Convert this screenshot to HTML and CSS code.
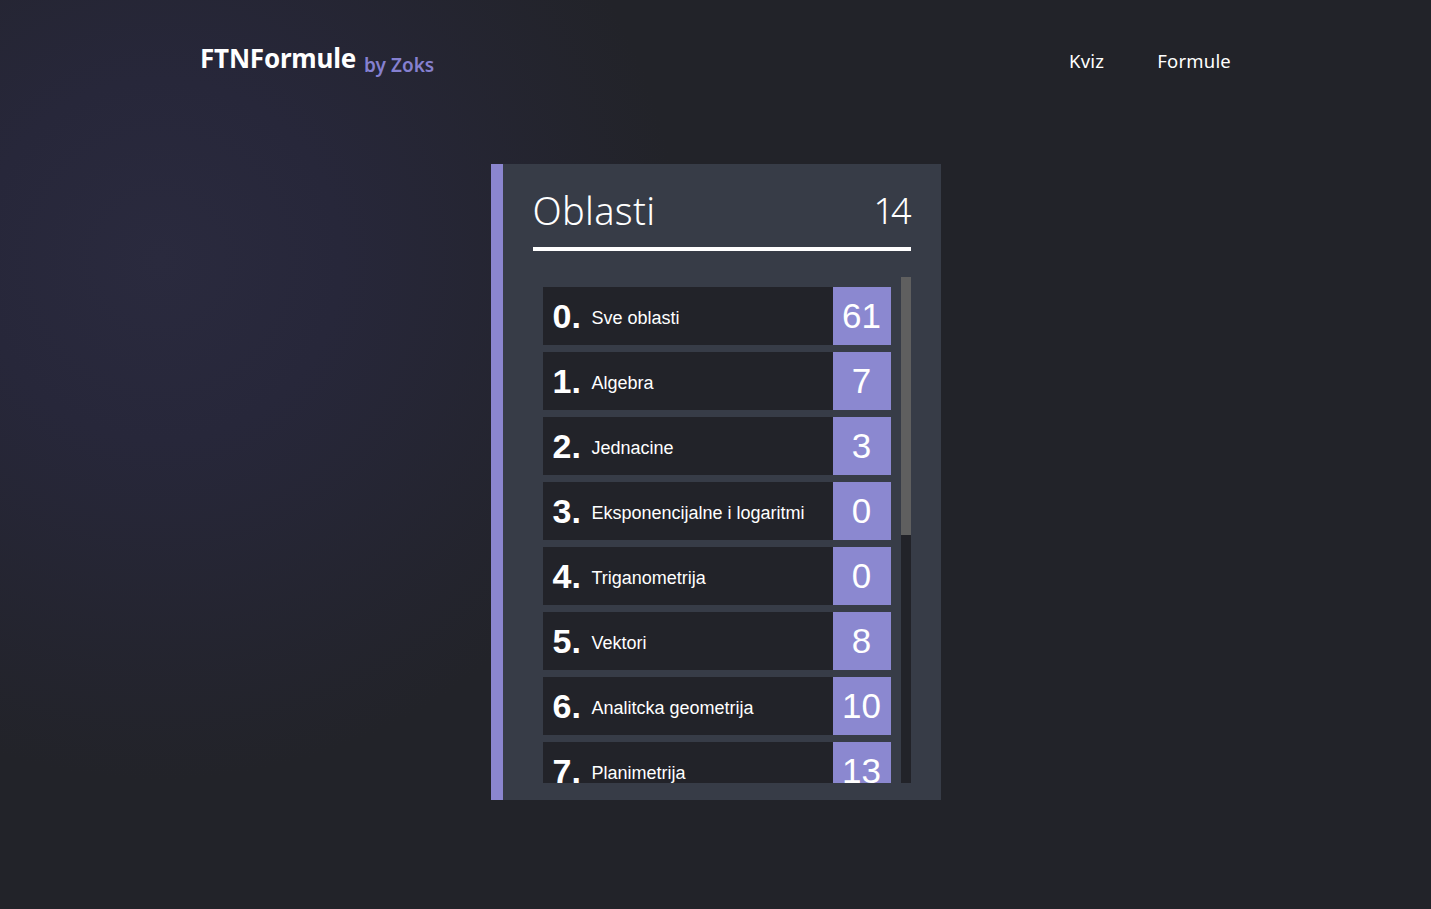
FILE: index.html
```html
<!DOCTYPE html>
<html lang="sr">
<head>
<meta charset="utf-8">
<title>FTNFormule</title>
<link rel="stylesheet" href="styles.css">
</head>
<body>
<header class="topbar">
  <div class="brand"><span class="brand-name">FTNFormule</span><span class="brand-by">by Zoks</span></div>
  <nav class="nav">
    <a class="nav-link" href="#">Kviz</a>
    <a class="nav-link" href="#">Formule</a>
  </nav>
</header>
<main class="main">
  <section class="card">
    <div class="card-head">
      <h1 class="card-title">Oblasti</h1>
      <span class="card-total">14</span>
    </div>
    <div class="scroller">
      <ul class="list">
        <li class="item"><span class="idx">0.</span><span class="label">Sve oblasti</span><span class="count">61</span></li>
        <li class="item"><span class="idx">1.</span><span class="label">Algebra</span><span class="count">7</span></li>
        <li class="item"><span class="idx">2.</span><span class="label">Jednacine</span><span class="count">3</span></li>
        <li class="item"><span class="idx">3.</span><span class="label">Eksponencijalne i logaritmi</span><span class="count">0</span></li>
        <li class="item"><span class="idx">4.</span><span class="label">Triganometrija</span><span class="count">0</span></li>
        <li class="item"><span class="idx">5.</span><span class="label">Vektori</span><span class="count">8</span></li>
        <li class="item"><span class="idx">6.</span><span class="label">Analitcka geometrija</span><span class="count">10</span></li>
        <li class="item"><span class="idx">7.</span><span class="label">Planimetrija</span><span class="count">13</span></li>
      </ul>
      <div class="scrollbar"><div class="thumb"></div></div>
    </div>
  </section>
</main>
</body>
</html>
```
FILE: styles.css
```css
* { box-sizing: border-box; }
html, body { height: 100%; }
body {
  margin: 0;
  color: #fff;
  font-family: "Noto Sans", "Inter", sans-serif;
  background-color: #222329;
  background-image: radial-gradient(circle at 160px 260px, #2a2a3e 0, #27273a 180px, rgba(34,35,41,0) 520px);
  overflow: hidden;
}
.topbar {
  width: 1031px;
  margin: 0 auto;
  padding-top: 40px;
  height: 164px;
  display: flex;
  justify-content: space-between;
  align-items: flex-start;
}
.brand { display: flex; align-items: baseline; gap: 8px; }
.brand-name {
  font-family: "Noto Sans", sans-serif;
  font-weight: 700;
  font-size: 26px;
  letter-spacing: -0.2px;
}
.brand-by {
  font-family: "Noto Sans", sans-serif;
  font-weight: 600;
  font-size: 19px;
  color: #8580d0;
  position: relative;
  top: 4px;
}
.nav { display: flex; gap: 53px; padding-top: 8px; }
.nav-link {
  color: #fff;
  text-decoration: none;
  font-family: "Noto Sans", sans-serif;
  font-size: 18.5px;
  letter-spacing: 0.2px;
}
.main { display: flex; justify-content: center; }
.card {
  width: 450px;
  height: 636px;
  background: #373c47;
  border-left: 12px solid #8b86cf;
  padding: 20px 30px 17px 30px;
  display: flex;
  flex-direction: column;
}
.card-head {
  display: flex;
  justify-content: space-between;
  align-items: center;
  height: 67px;
  padding-bottom: 11px;
  border-bottom: 4px solid #fff;
  font-family: "Noto Sans", sans-serif;
  font-weight: 300;
  font-size: 38px;
}
.card-title { margin: 0; font-size: 38px; font-weight: 300; letter-spacing: 0.3px; }
.card-total { font-weight: 300; font-size: 36px; letter-spacing: -3px; padding-right: 2px; }
.scroller {
  margin-top: 26px;
  height: 506px;
  display: flex;
  overflow: hidden;
}
.list {
  list-style: none;
  margin: 0;
  padding: 10px 10px 0 10px;
  flex: 1;
  overflow: hidden;
  display: flex;
  flex-direction: column;
  gap: 7px;
}
.scrollbar {
  width: 10px;
  flex: none;
  background: #222329;
}
.thumb { height: 258px; background: #5f5f5f; }
.item {
  flex: 0 0 58px;
  height: 58px;
  background: #222329;
  display: flex;
  align-items: center;
  font-family: "Liberation Sans", Arial, sans-serif;
}
.idx {
  font-weight: 700;
  font-size: 34px;
  padding-left: 10px;
  width: 49px;
  flex: none;
}
.label { font-size: 18px; flex: 1; padding-top: 4px; }
.count {
  width: 58px;
  height: 58px;
  background: #8b88d0;
  font-size: 35px;
  display: flex;
  align-items: center;
  justify-content: center;
  flex: none;
}
```
